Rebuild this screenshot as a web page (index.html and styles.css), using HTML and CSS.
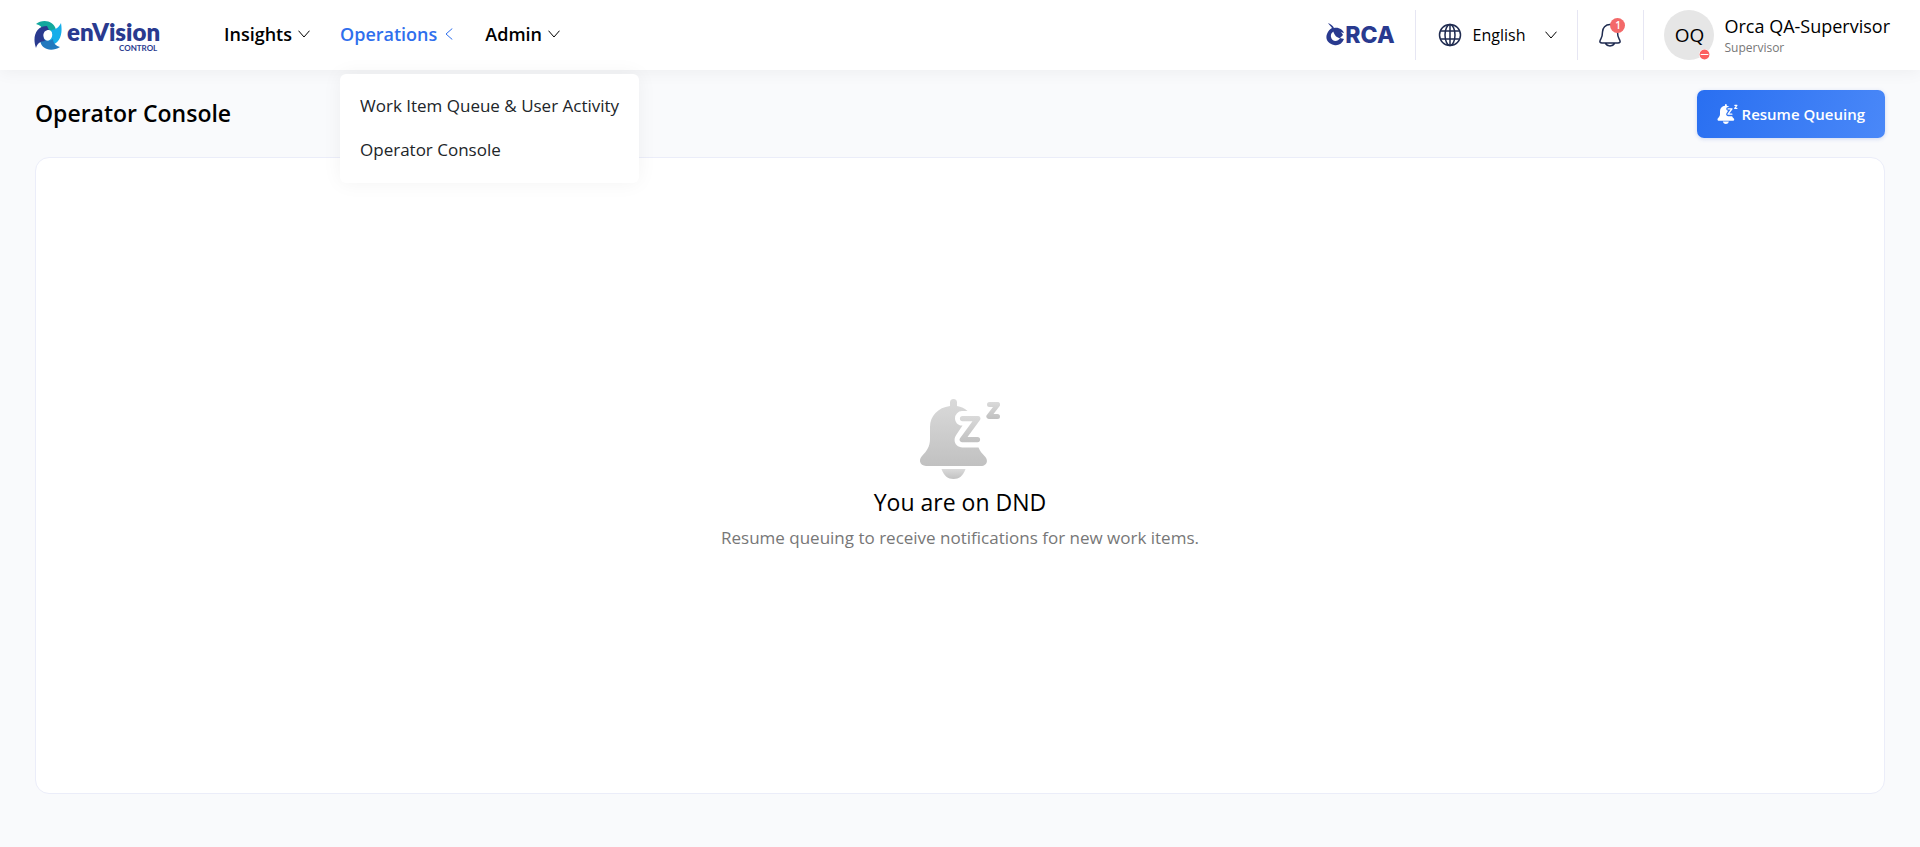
FILE: index.html
```html
<!DOCTYPE html>
<html lang="en">
<head>
<meta charset="utf-8">
<title>Operator Console</title>
<link rel="stylesheet" href="styles.css">
</head>
<body>
<svg class="defs" aria-hidden="true">
  <defs>
    <linearGradient id="bell-fill" x1="0" y1="0" x2="0" y2="1"><stop offset="0" stop-color="#dadada"/><stop offset="1" stop-color="#c1c1c1"/></linearGradient>
    <symbol id="snooze" viewBox="0 0 80 80">
      <path d="M30 3.500a3.500 3.500 0 0 1 7 0V7C41 7.600 45 9.600 47.500 12H42a7.200 7.200 0 0 0-7 7.200c0 4 3 7.300 7 7.300h.5L36.500 35.500C32 42 36 48.500 42.500 48.500H58.500C60 52 62 54.500 64.500 57C69.500 62 66 67 61 67H6C1 67-2.500 62 2 57C7 52 10 47 10 40V28C10 17 18 8.500 30 7Z"/>
      <path d="M21.500 70H45.500C43 77 39 80 33.500 80S24 77 21.500 70Z"/>
      <path d="M42.500 17H58a2.500 2.500 0 0 1 2 4L47.500 38H57.500a2.500 2.500 0 0 1 0 5.200H42a2.500 2.500 0 0 1-2-4L52.500 22.200H42.500a2.600 2.600 0 0 1 0-5.200Z"/>
      <path d="M69.500 3H77.500a2.500 2.500 0 0 1 2 4.200L73.500 15H77.500a2.500 2.500 0 0 1 0 5H69a2.500 2.500 0 0 1-2-4.200L73 8H69.500a2.500 2.500 0 0 1 0-5Z"/>
    </symbol>
    <symbol id="chevron" viewBox="0 0 12 8"><path d="M.5.7 6 7 11.500.7" fill="none" stroke="currentColor" stroke-width="1"/></symbol>
  </defs>
</svg>
<header class="topbar">
  <a class="brand" href="#" aria-label="enVision Control">
    <svg class="brand-mark" viewBox="0 0 28 29" aria-hidden="true">
      <path d="M2 3C8-2 20-1 22 9L19 12C16 8 12 8 8 11C9 7 7 4 2 3Z" fill="#12a89d"/>
      <path d="M27 2C29 13 26 23 16 24L14 20C19 18 19 13 17 9C22 9 25 6 27 2Z" fill="#15aeea"/>
      <path d="M26 26C18 31 7 29 6 19L9 15C10 20 15 21 19 18C19 22 22 25 26 26Z" fill="#2178be"/>
      <path d="M2 27C-2 16 2 5 13 5L15 9C9 9 8 15 11 20C6 20 3 23 2 27Z" fill="#293a8f"/>
    </svg>
    <span class="brand-text"><span class="brand-name">enVision</span><span class="brand-sub">CONTROL</span></span>
  </a>
  <nav class="nav">
    <button class="nav-item" type="button">Insights<svg class="chev"><use href="#chevron"/></svg></button>
    <div class="nav-group">
      <button class="nav-item active" type="button" aria-expanded="true">Operations<svg class="chev turned"><use href="#chevron"/></svg></button>
      <div class="menu">
        <a href="#">Work Item Queue &amp; User Activity</a>
        <a href="#">Operator Console</a>
      </div>
    </div>
    <button class="nav-item" type="button">Admin<svg class="chev"><use href="#chevron"/></svg></button>
  </nav>
  <div class="tools">
    <div class="cell orca">
      <svg class="orca-mark" viewBox="0 0 19 24" aria-hidden="true"><path d="M2 0C5 1 7 3 8 5C13 4 17 7 18 10L14 9C10 6 4 9 5 14C6 19 12 19 14 15L18 16C16 21 12 23 8 22C2 21-1 16 1 11C2 8 4 6 6 5C5 3 3 2 2 0Z"/><path d="M7 8C10 5 15 8 17 12L14 15C11 15 9 13 7 8Z"/></svg>
      <span class="orca-text">RCA</span>
    </div>
    <button class="cell language" type="button">
      <svg class="globe" viewBox="0 0 24 24" aria-hidden="true"><circle cx="12" cy="12" r="10.500"/><ellipse cx="12" cy="12" rx="5" ry="10.500"/><path d="M12 1.500v21M3 8h18M3 16h18"/></svg>
      <span class="language-name">English</span>
      <svg class="chev"><use href="#chevron"/></svg>
    </button>
    <button class="cell alerts" type="button" aria-label="Notifications">
      <svg class="bell" viewBox="0 0 22 24" aria-hidden="true"><path d="M11 1.500C6.500 1.500 3.500 5 3.500 9C3.500 14 2.500 15 1.300 17C.3 19 1.300 20 3 20H19C20.700 20 21.700 19 20.700 17C19.500 15 18.500 14 18.500 9C18.500 5 15.500 1.500 11 1.500ZM6.500 20.500C8.500 23.800 13.500 23.800 15.500 20.500"/></svg>
      <span class="count">1</span>
    </button>
    <div class="cell user">
      <span class="avatar">OQ<svg class="status" viewBox="0 0 10 10"><circle cx="5" cy="5" r="4.500" fill="#fc6060"/><path d="M1.500 5h7" stroke="#fff"/></svg></span>
      <span class="user-text"><span class="user-name">Orca QA-Supervisor</span><span class="user-role">Supervisor</span></span>
    </div>
  </div>
</header>
<main class="page">
  <div class="page-head">
    <h1>Operator Console</h1>
    <button class="resume" type="button"><svg class="resume-icon"><use href="#snooze"/></svg>Resume Queuing</button>
  </div>
  <section class="panel">
    <svg class="panel-icon" aria-hidden="true"><use href="#snooze"/></svg>
    <h2>You are on DND</h2>
    <p>Resume queuing to receive notifications for new work items.</p>
  </section>
</main>
</body>
</html>
```
FILE: styles.css
```css
* { box-sizing: border-box; }
body { margin: 0; min-height: 100vh; display: flex; flex-direction: column; background: #f9fafc; color: #000; font-family: "Open Sans", sans-serif; }
button { font: inherit; color: inherit; background: none; border: 0; padding: 0; cursor: pointer; }
a { color: inherit; text-decoration: none; }
h1, h2, p { margin: 0; }
.defs { position: absolute; width: 0; height: 0; }

.topbar { position: relative; z-index: 1; display: flex; align-items: center; height: 70px; padding: 0 30px 0 34px; background: #fff; box-shadow: 0 2px 16px rgba(0, 0, 0, .05); }
.brand { display: flex; align-items: center; gap: 5px; width: 190px; color: #293a8f; }
.brand-mark { width: 28px; height: 29px; }
.brand-text { display: flex; flex-direction: column; padding-top: 2px; font-family: Lato, sans-serif; }
.brand-name { font-size: 24px; line-height: 24px; font-weight: 800; }
.brand-sub { padding-left: 52px; font-size: 8px; line-height: 8px; font-weight: 700; }

.nav { display: flex; align-items: center; gap: 30px; padding-bottom: 2px; }
.nav-group { position: relative; }
.nav-item { display: flex; align-items: center; gap: 6px; font-size: 18px; line-height: 24px; font-weight: 600; }
.nav-item.active { color: #2f6fed; }
.chev { width: 12px; height: 8px; }
.turned { transform: rotate(90deg); }
.menu { position: absolute; top: 52px; left: 0; display: flex; flex-direction: column; gap: 20px; padding: 20px 20px 21px; background: #fff; border-radius: 6px; box-shadow: 0 0 20px rgba(0, 0, 0, .05); color: #212529; font-size: 17px; line-height: 24px; font-weight: 500; white-space: nowrap; }

.tools { display: flex; align-items: center; margin-left: auto; }
.cell { display: flex; align-items: center; height: 50px; padding: 0 20px; border-left: 1px solid #e6e6f3; }
.orca { border: 0; color: #293a8f; }
.orca-mark { width: 19px; height: 24px; fill: currentColor; }
.orca-text { font-family: Inter, sans-serif; font-size: 23px; font-weight: 800; line-height: 24px; }
.language { padding-left: 22px; }
.globe { width: 24px; height: 24px; margin-right: 11px; fill: none; stroke: #1f2b50; stroke-width: 1.500; }
.language-name { margin-right: 20px; font-size: 16px; }
.alerts { position: relative; padding: 0 22px 0 21px; }
.bell { width: 22px; height: 24px; fill: none; stroke: #1f2b50; stroke-width: 1.500; }
.count { position: absolute; top: 8px; right: 18px; width: 15px; height: 15px; border-radius: 50%; background: #f36969; color: #fff; font-size: 10px; line-height: 15px; font-weight: 600; text-align: center; }
.user { gap: 10px; padding-right: 0; }
.avatar { position: relative; display: grid; place-items: center; width: 50px; height: 50px; border-radius: 50%; background: #e6e6e6; font-size: 19px; }
.status { position: absolute; right: 4px; bottom: 0; width: 11px; height: 11px; border-radius: 50%; background: #fff; }
.user-text { display: flex; flex-direction: column; padding-top: 2px; }
.user-name { font-size: 18px; line-height: 24px; font-weight: 500; }
.user-role { font-size: 12px; line-height: 20px; color: #777; font-weight: 500; }

.page { flex: 1; display: flex; flex-direction: column; padding: 20px 35px 53px; }
.page-head { display: flex; align-items: center; justify-content: space-between; margin-bottom: 19px; }
h1 { padding-bottom: 2px; font-size: 23px; line-height: 32px; font-weight: 600; }
.resume { display: flex; align-items: center; gap: 4px; height: 48px; padding: 0 20px; border-radius: 7px; background: linear-gradient(110deg, #296ff1, #4a88f8); box-shadow: 0 1px 4px rgba(40, 80, 200, .2); color: #fff; font-size: 15px; font-weight: 600; }
.resume-icon { width: 21px; height: 20px; fill: #fff; }
.panel { flex: 1; display: flex; flex-direction: column; align-items: center; justify-content: center; padding-bottom: 3px; background: #fff; border: 1px solid #ebedf9; border-radius: 14px; }
.panel-icon { width: 80px; height: 80px; fill: url(#bell-fill); }
h2 { margin-top: 7px; font-size: 23px; line-height: 32px; font-weight: 500; }
.panel p { margin-top: 8px; color: #777; font-size: 17px; line-height: 24px; font-weight: 500; }
```
